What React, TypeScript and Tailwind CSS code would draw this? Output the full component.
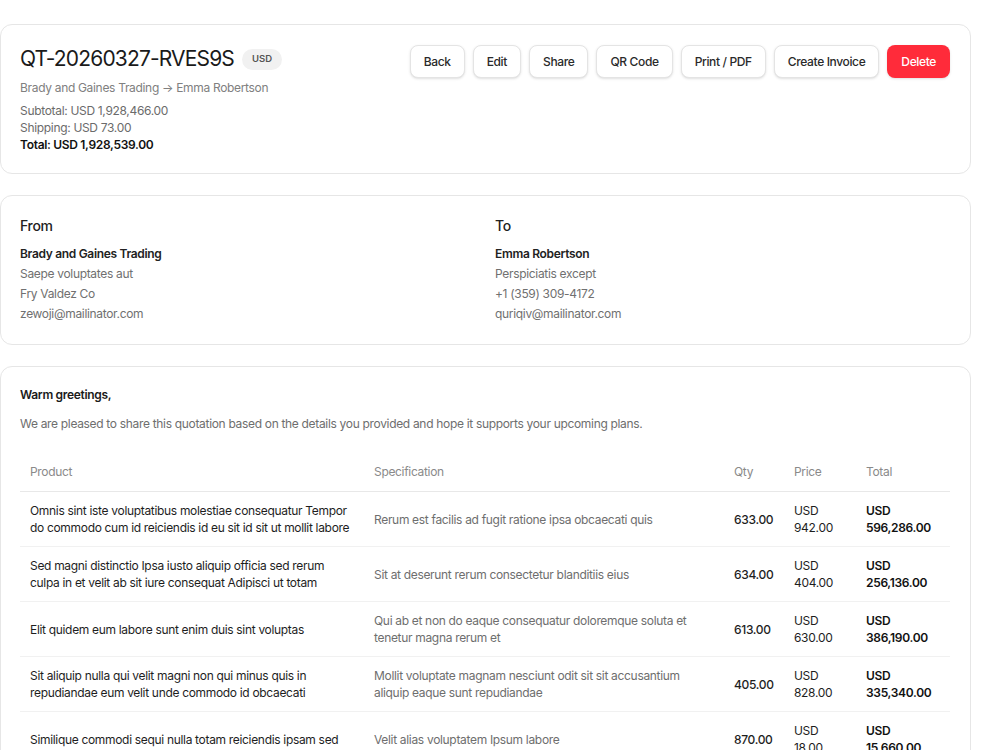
import React from 'react';

interface Item {
  product: string;
  spec: string;
  qty: string;
  price: string;
  total: string;
}

const items: Item[] = [
  {
    product: 'Omnis sint iste voluptatibus molestiae consequatur Tempor do commodo cum id reiciendis id eu sit id sit ut mollit labore',
    spec: 'Rerum est facilis ad fugit ratione ipsa obcaecati quis',
    qty: '633.00',
    price: '942.00',
    total: '596,286.00',
  },
  {
    product: 'Sed magni distinctio Ipsa iusto aliquip officia sed rerum culpa in et velit ab sit iure consequat Adipisci ut totam',
    spec: 'Sit at deserunt rerum consectetur blanditiis eius',
    qty: '634.00',
    price: '404.00',
    total: '256,136.00',
  },
  {
    product: 'Elit quidem eum labore sunt enim duis sint voluptas',
    spec: 'Qui ab et non do eaque consequatur doloremque soluta et tenetur magna rerum et',
    qty: '613.00',
    price: '630.00',
    total: '386,190.00',
  },
  {
    product: 'Sit aliquip nulla qui velit magni non qui minus quis in repudiandae eum velit unde commodo id obcaecati',
    spec: 'Mollit voluptate magnam nesciunt odit sit sit accusantium aliquip eaque sunt repudiandae',
    qty: '405.00',
    price: '828.00',
    total: '335,340.00',
  },
  {
    product: 'Similique commodi sequi nulla totam reiciendis ipsam sed',
    spec: 'Velit alias voluptatem Ipsum labore',
    qty: '870.00',
    price: '18.00',
    total: '15,660.00',
  },
];

const actions = ['Back', 'Edit', 'Share', 'QR Code', 'Print / PDF', 'Create Invoice'];

const Party: React.FC<{ title: string; name: string; lines: string[] }> = ({ title, name, lines }) => (
  <div>
    <h3 className="text-sm leading-5 font-medium text-[#222]">{title}</h3>
    <div className="mt-2 text-xs leading-5">
      <p className="font-semibold text-[#222]">{name}</p>
      {lines.map((l) => (
        <p key={l} className="text-[#707070]">{l}</p>
      ))}
    </div>
  </div>
);

export default function App() {
  return (
    <div className="min-h-screen bg-white font-['Inter',sans-serif] tracking-[-0.02em] text-[#1c1c1c]">
      <div className="flex w-[971px] flex-col gap-[21px] pt-6 pb-10">
        {/* header card */}
        <section className="flex items-start justify-between rounded-xl border border-[#e6e6e6] bg-white py-5 pr-5 pl-[19px]">
          <div>
            <div className="flex items-center gap-2">
              <h1 className="text-[21px] leading-7 tracking-[-0.04em] text-[#1a1a1a]">QT-20260327-RVES9S</h1>
              <span className="flex h-[21px] items-center rounded-full bg-[#f1f1f1] px-2.5 text-[9.5px] font-semibold tracking-normal text-[#555]">
                USD
              </span>
            </div>
            <p className="mt-1.5 text-xs leading-[17px] text-[#808080]">Brady and Gaines Trading → Emma Robertson</p>
            <div className="mt-1.5 text-xs leading-[17px]">
              <p className="text-[#6b6b6b]">Subtotal: USD 1,928,466.00</p>
              <p className="text-[#6b6b6b]">Shipping: USD 73.00</p>
              <p className="font-semibold text-[#111]">Total: USD 1,928,539.00</p>
            </div>
          </div>
          <div className="flex gap-2">
            {actions.map((a) => (
              <button
                key={a}
                className="h-[33px] rounded-lg border border-[#e4e4e4] bg-white px-[13px] text-xs font-medium tracking-[-0.03em] text-[#2a2a2a] shadow-sm"
              >
                {a}
              </button>
            ))}
            <button className="h-[33px] rounded-lg bg-[#ff2b3a] px-3.5 text-xs font-medium tracking-[-0.03em] text-white shadow-sm">
              Delete
            </button>
          </div>
        </section>

        {/* parties */}
        <section className="grid grid-cols-2 gap-5 rounded-xl border border-[#e6e6e6] bg-white py-5 pr-5 pl-[19px]">
          <Party
            title="From"
            name="Brady and Gaines Trading"
            lines={['Saepe voluptates aut', 'Fry Valdez Co', 'zewoji@mailinator.com']}
          />
          <Party
            title="To"
            name="Emma Robertson"
            lines={['Perspiciatis except', '+1 (359) 309-4172', 'quriqiv@mailinator.com']}
          />
        </section>

        {/* items */}
        <section className="rounded-xl border border-[#e6e6e6] bg-white pt-[19px] pr-5 pb-5 pl-[19px]">
          <p className="text-xs leading-[17px] font-semibold text-[#1a1a1a]">Warm greetings,</p>
          <p className="mt-3 text-xs leading-[17px] text-[#6e6e6e]">
            We are pleased to share this quotation based on the details you provided and hope it supports your upcoming plans.
          </p>
          <table className="mt-[18px] w-full table-fixed border-collapse text-left text-xs leading-[17px]">
            <colgroup>
              <col className="w-[344px]" />
              <col className="w-[360px]" />
              <col className="w-[60px]" />
              <col className="w-[72px]" />
              <col />
            </colgroup>
            <thead>
              <tr className="border-b border-[#e8e8e8]">
                {['Product', 'Specification', 'Qty', 'Price', 'Total'].map((h) => (
                  <th key={h} className="px-2.5 pt-[13px] pb-[11px] font-normal text-[#8a8a8a]">{h}</th>
                ))}
              </tr>
            </thead>
            <tbody>
              {items.map((it) => (
                <tr key={it.qty} className="border-b border-[#f1f1f1]">
                  <td className="px-2.5 py-2.5 align-middle text-[#1e1e1e]">{it.product}</td>
                  <td className="px-2.5 py-2.5 align-middle text-[#6e6e6e]">{it.spec}</td>
                  <td className="px-2.5 py-2.5 align-middle whitespace-nowrap font-medium text-[#1e1e1e]">{it.qty}</td>
                  <td className="px-2.5 py-2.5 align-middle text-[#1e1e1e]">
                    USD
                    <br />
                    {it.price}
                  </td>
                  <td className="px-2.5 py-2.5 align-middle font-semibold text-[#111]">
                    USD
                    <br />
                    {it.total}
                  </td>
                </tr>
              ))}
            </tbody>
          </table>
        </section>
      </div>
    </div>
  );
}
